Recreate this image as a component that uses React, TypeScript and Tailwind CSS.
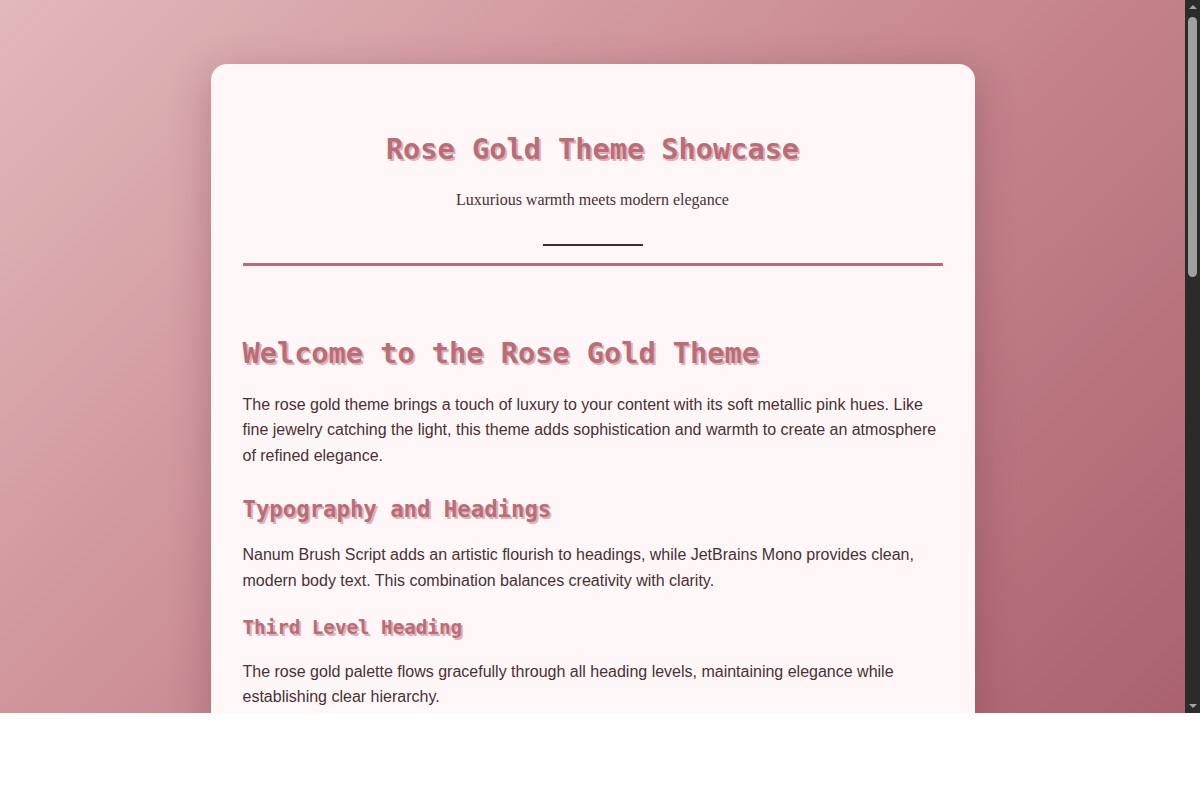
import React from 'react';

const headingShadow = '[text-shadow:2px_2px_0_#e6adb3]';

// Fake classic scrollbar so the frame matches the captured window
const Scrollbar: React.FC = () => (
    <div className="flex w-[15px] shrink-0 flex-col items-center bg-[#2b2b2b]">
        <div className="mt-[5px] h-0 w-0 border-x-[4px] border-b-[4px] border-x-transparent border-b-[#a3a3a3]" />
        <div className="mt-[8px] h-[260px] w-[9px] rounded-[5px] bg-[#a0a0a0]" />
        <div className="flex-1" />
        <div className="mb-[5px] h-0 w-0 border-x-[4px] border-t-[4px] border-x-transparent border-t-[#a3a3a3]" />
    </div>
);

export default function App() {
    return (
        <div className="flex h-[713px]">
            <div className="flex-1 overflow-hidden bg-[linear-gradient(135deg,#e3b8ba_0%,#c98a91_50%,#ab626e_100%)]">
                <div className="flex justify-center pt-[64px] pb-16">
                    <div className="w-[764px] rounded-2xl bg-[#fff7f7] px-8 pt-8 pb-10 shadow-[0_10px_40px_rgba(90,30,45,0.3)]">
                        {/* Header */}
                        <header className="border-b-[3px] border-[#b96a78] pt-[36px] pb-[17px] text-center">
                            <h1 className={`font-['DejaVu_Sans_Mono',monospace] text-[28.6px] font-bold leading-[35px] text-[#b76e79] ${headingShadow}`}>
                                Rose Gold Theme Showcase
                            </h1>
                            <p className="mt-[20px] font-['Liberation_Serif',serif] text-base leading-[25.6px] text-[#4a3035]">
                                Luxurious warmth meets modern elegance
                            </p>
                            <div className="mx-auto mt-[31px] h-[2px] w-[100px] bg-[#3d2a2e]" />
                        </header>

                        {/* Content */}
                        <main className="font-['Liberation_Sans',Arial,sans-serif] text-base leading-[25.6px] text-[#4a3035]">
                            <h2 className={`mt-[70px] font-['DejaVu_Sans_Mono',monospace] text-[28.6px] font-bold leading-[35px] text-[#b76e79] ${headingShadow}`}>
                                Welcome to the Rose Gold Theme
                            </h2>
                            <p className="mt-[21px]">
                                The rose gold theme brings a touch of luxury to your content with its soft metallic pink hues. Like fine jewelry catching the light, this theme adds sophistication and warmth to create an atmosphere of refined elegance.
                            </p>

                            <h3 className={`mt-[28px] font-['DejaVu_Sans_Mono',monospace] text-[22.3px] font-bold leading-[26px] text-[#b76e79] ${headingShadow}`}>
                                Typography and Headings
                            </h3>
                            <p className="mt-[20px]">
                                Nanum Brush Script adds an artistic flourish to headings, while JetBrains Mono provides clean, modern body text. This combination balances creativity with clarity.
                            </p>

                            <h4 className={`mt-[22px] font-['DejaVu_Sans_Mono',monospace] text-[19.2px] font-bold leading-[23px] text-[#b76e79] ${headingShadow}`}>
                                Third Level Heading
                            </h4>
                            <p className="mt-[20px]">
                                The rose gold palette flows gracefully through all heading levels, maintaining elegance while establishing clear hierarchy.
                            </p>
                        </main>
                    </div>
                </div>
            </div>
            <Scrollbar />
        </div>
    );
}
